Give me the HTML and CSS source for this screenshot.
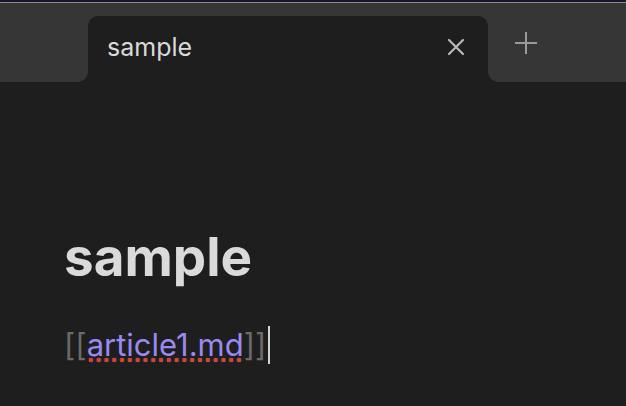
FILE: index.html
```html
<!DOCTYPE html>
<html>
<head>
<meta charset="utf-8">
<link rel="stylesheet" href="styles.css">
</head>
<body>
<div class="topline"></div>
<div class="tabbar">
  <div class="tab">
    <span class="tab-title">sample</span>
    <svg class="tab-close" width="18" height="18" viewBox="0 0 18 18"><path d="M2 2 L16 16 M16 2 L2 16" stroke="#b8b8b8" stroke-width="2.2" stroke-linecap="round" fill="none"/></svg>
  </div>
  <svg class="tab-new" width="24" height="24" viewBox="0 0 24 24"><path d="M12 1 V23 M1 12 H23" stroke="#9a9a9a" stroke-width="2" fill="none"/></svg>
</div>
<main class="content">
  <h1 class="title">sample</h1>
  <p class="line"><span class="bracket">[[</span><span class="link">article1.md</span><span class="bracket">]]</span><span class="cursor"></span></p>
</main>
</body>
</html>
```
FILE: styles.css
```css
html, body {
  margin: 0;
  padding: 0;
  background: #1e1e1e;
  font-family: Inter, "Noto Sans", sans-serif;
  overflow: hidden;
}
.topline {
  height: 2px;
  background: #18142e;
  border-bottom: 1px solid #8c8c8c;
}
.tabbar {
  height: 79px;
  background: #363636;
  display: flex;
  align-items: flex-end;
}
.tab {
  position: relative;
  margin-left: 88px;
  width: 400px;
  height: 66px;
  background: #1e1e1e;
  border-radius: 10px 10px 0 0;
  display: flex;
  align-items: center;
  justify-content: space-between;
  padding: 0 23px 2px 19px;
  box-sizing: border-box;
}
.tab::before, .tab::after {
  content: "";
  position: absolute;
  bottom: 0;
  width: 10px;
  height: 10px;
}
.tab::before {
  left: -10px;
  background: radial-gradient(circle at 0 0, transparent 9.5px, #1e1e1e 10px);
}
.tab::after {
  right: -10px;
  background: radial-gradient(circle at 100% 0, transparent 9.5px, #1e1e1e 10px);
}
.tab-title {
  font-size: 25px;
  line-height: 30px;
  color: #dadada;
  padding-bottom: 2px;
}
.tab-close {
  display: block;
  margin-bottom: 2px;
}
.tab-new {
  display: block;
  margin-left: 26px;
  align-self: flex-start;
  margin-top: 28px;
}
.content {
  padding-left: 64px;
}
.title {
  margin: 144px 0 0 0;
  font-size: 53px;
  line-height: 62px;
  font-weight: 700;
  color: #dadada;
}
.line {
  margin: 37px 0 0 0;
  font-size: 31px;
  line-height: 40px;
  color: #9a89f3;
}
.bracket {
  color: #6a6a6a;
}
.link {
  color: #9a89f3;
  background-image: radial-gradient(circle, #c8473a 2.1px, transparent 2.6px);
  background-size: 7.8px 6px;
  background-repeat: repeat-x;
  background-position: 0 100%;
}
.cursor {
  display: inline-block;
  width: 2px;
  height: 38px;
  background: #d4d4d4;
  margin-left: 2px;
  vertical-align: -8px;
}
```
